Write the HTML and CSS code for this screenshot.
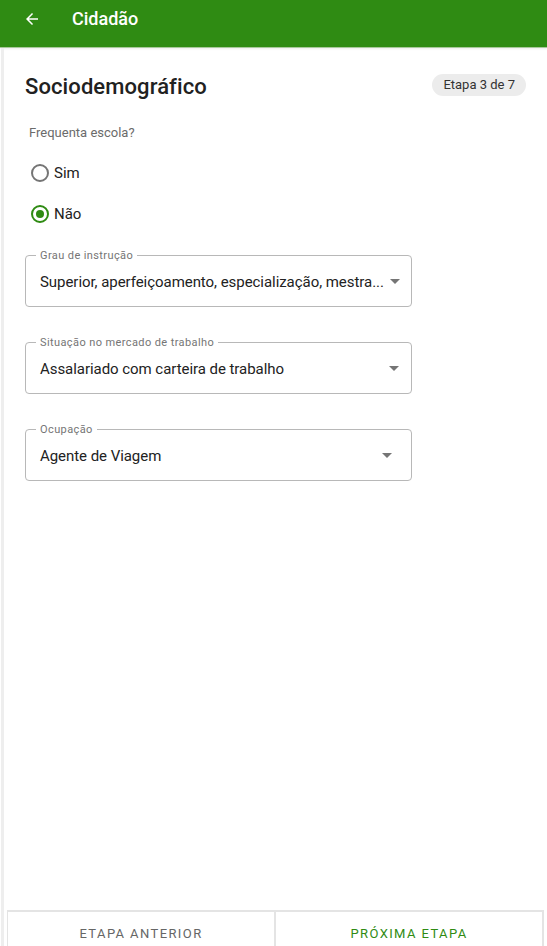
FILE: index.html
```html
<!DOCTYPE html>
<html lang="pt">
<head>
<meta charset="utf-8">
<link rel="stylesheet" href="styles.css">
</head>
<body>
<div class="app">
  <header class="topbar">
    <svg class="back" width="18" height="18" viewBox="0 0 24 24"><path d="M20 11H7.83l5.59-5.59L12 4l-8 8 8 8 1.41-1.41L7.83 13H20v-2z" fill="#fff"/></svg>
    <span class="title">Cidadão</span>
  </header>
  <main class="page">
    <div class="head">
      <h1>Sociodemográfico</h1>
      <span class="chip">Etapa 3 de 7</span>
    </div>
    <p class="question">Frequenta escola?</p>
    <div class="radios">
      <label class="radio"><span class="dot"></span>Sim</label>
      <label class="radio checked"><span class="dot"></span>Não</label>
    </div>
    <div class="fields">
      <div class="select">
        <span class="label">Grau de instrução</span>
        <span class="value">Superior, aperfeiçoamento, especialização, mestra...</span>
        <span class="caret"></span>
      </div>
      <div class="select">
        <span class="label">Situação no mercado de trabalho</span>
        <span class="value">Assalariado com carteira de trabalho</span>
        <span class="caret"></span>
      </div>
      <div class="select auto">
        <span class="label">Ocupação</span>
        <span class="value">Agente de Viagem</span>
        <span class="caret"></span>
      </div>
    </div>
  </main>
  <footer class="actions">
    <button class="btn prev">ETAPA ANTERIOR</button>
    <button class="btn next">PRÓXIMA ETAPA</button>
  </footer>
</div>
</body>
</html>
```
FILE: styles.css
```css
* { box-sizing: border-box; }
html, body { margin: 0; padding: 0; }
body {
  font-family: Roboto, "Noto Sans", sans-serif;
  background: #fff;
  color: #222;
  width: 547px;
  height: 946px;
  overflow: hidden;
}
.app {
  height: 946px;
  display: flex;
  flex-direction: column;
}
.topbar {
  height: 48px;
  background: #2f8b13;
  display: flex;
  align-items: flex-start;
  padding: 10px 0 0 23px;
  gap: 31px;
  border-bottom: 1px solid #a8c99b;
  box-shadow: 0 1px 2px rgba(0, 0, 0, 0.08);
  flex: none;
}
.back { display: block; margin-top: 0; }
.title {
  color: #fff;
  font-size: 18px;
  font-weight: 500;
  line-height: 18px;
  margin-top: 0;
}
.page {
  flex: 1;
  border-left: 3px solid #eeeeee;
  margin-left: 1px;
  padding: 26px 21px 0 21px;
}
.head {
  display: flex;
  align-items: center;
  justify-content: space-between;
}
h1 {
  margin: 0;
  font-size: 22px;
  font-weight: 500;
  color: #212121;
  letter-spacing: 0.1px;
}
.chip {
  background: #ececec;
  border-radius: 12px;
  font-size: 13px;
  color: #333;
  padding: 3px 11px 4px;
  margin-top: -3px;
}
.question {
  margin: 26px 0 0 4px;
  font-size: 13px;
  color: #6b6b6b;
}
.radios {
  display: flex;
  flex-direction: column;
  gap: 21px;
  margin: 23px 0 0 6px;
}
.radio {
  display: flex;
  align-items: center;
  gap: 5px;
  font-size: 15px;
  color: #222;
  height: 20px;
}
.dot {
  width: 18px;
  height: 18px;
  border: 2px solid #757575;
  border-radius: 50%;
  display: inline-flex;
  align-items: center;
  justify-content: center;
}
.radio.checked .dot { border-color: #2f8b13; }
.radio.checked .dot::after {
  content: "";
  width: 8px;
  height: 8px;
  border-radius: 50%;
  background: #2f8b13;
}
.fields {
  display: flex;
  flex-direction: column;
  gap: 35px;
  margin-top: 31px;
  width: 387px;
}
.select {
  position: relative;
  border: 1px solid #b8b8b8;
  border-radius: 4px;
  height: 52px;
  padding: 0 12px 0 14px;
  display: flex;
  align-items: center;
  gap: 6px;
}
.select.auto { padding-right: 19px; }
.label {
  position: absolute;
  left: 10px;
  top: -7px;
  background: #fff;
  font-size: 11px;
  line-height: 14px;
  color: #757575;
  padding: 0 4px;
  letter-spacing: 0.4px;
}
.value {
  flex: 1;
  font-size: 15px;
  color: #222;
  white-space: nowrap;
  letter-spacing: -0.05px;
  margin-top: 2px;
}
.caret {
  flex: none;
  width: 0;
  height: 0;
  border-left: 5px solid transparent;
  border-right: 5px solid transparent;
  border-top: 5px solid #757575;
  margin-top: 1px;
}
.actions {
  flex: none;
  height: 36px;
  display: flex;
  margin: 0 3px 0 7px;
  border-top: 2px solid #e4e4e4;
  border-left: 1px solid #e4e4e4;
  border-right: 2px solid #e4e4e4;
  position: relative;
}
.actions::before {
  content: "";
  position: absolute;
  left: -7px;
  top: -12px;
  bottom: 0;
  width: 3px;
  background: #eeeeee;
}
.btn {
  flex: 1;
  background: #fff;
  border: 0;
  font-family: Roboto, "Noto Sans", sans-serif;
  font-size: 13px;
  letter-spacing: 1.4px;
  padding: 9px 0 0;
}
.prev { color: #666; border-right: 2px solid #e4e4e4; }
.next { color: #2f8b13; }
```
